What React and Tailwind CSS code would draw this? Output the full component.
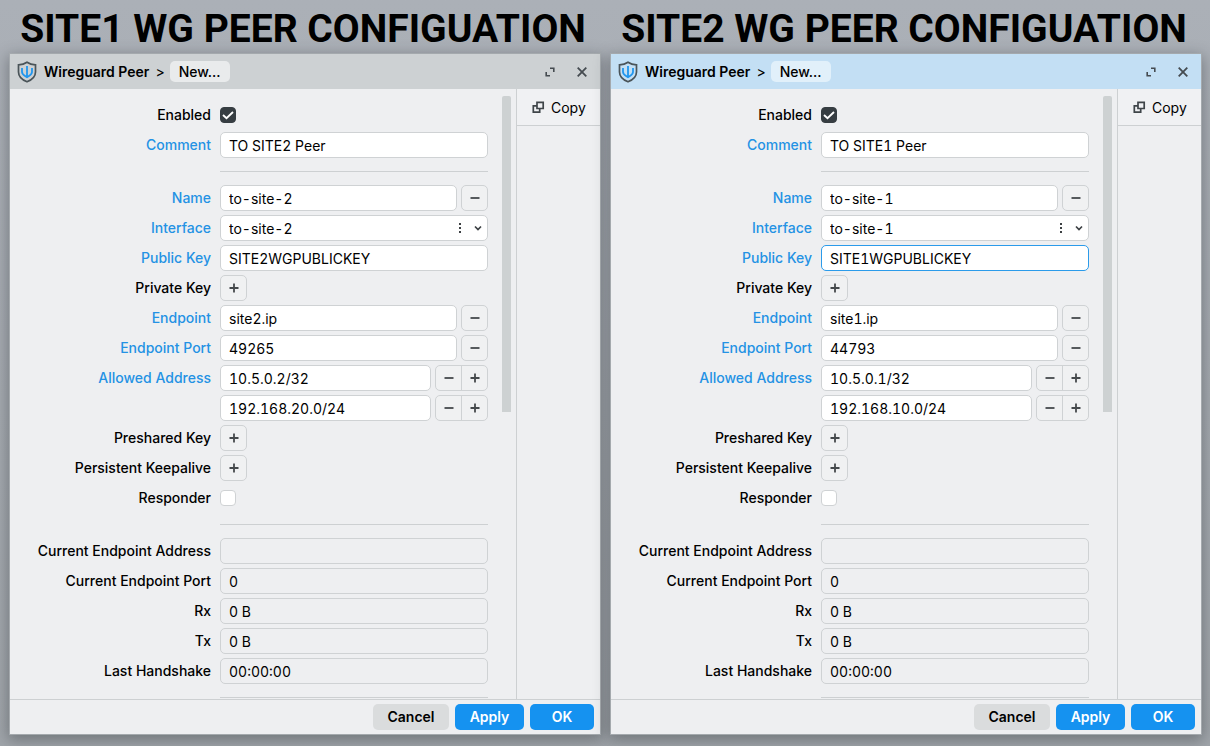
import { useId } from 'react';

const sites = [
  {
    title: 'SITE1 WG PEER CONFIGUATION',
    comment: 'TO SITE2 Peer',
    name: 'to-site-2',
    publicKey: 'SITE2WGPUBLICKEY',
    endpoint: 'site2.ip',
    port: '49265',
    allowed: ['10.5.0.2/32', '192.168.20.0/24'],
    active: false,
  },
  {
    title: 'SITE2 WG PEER CONFIGUATION',
    comment: 'TO SITE1 Peer',
    name: 'to-site-1',
    publicKey: 'SITE1WGPUBLICKEY',
    endpoint: 'site1.ip',
    port: '44793',
    allowed: ['10.5.0.1/32', '192.168.10.0/24'],
    active: true,
  },
];

const inputBase =
  'h-[26px] w-full min-w-0 flex-1 rounded-[5px] border px-2 pt-px tabular-nums outline-none';

function ShieldIcon() {
  return (
    <svg width="20" height="22" viewBox="0 0 20 22" fill="none">
      <path
        d="M10 1.2C7.6 2.9 4.7 3.7 1.5 3.8V11c0 4.6 3.5 7.8 8.5 9.8 5-2 8.500-5.2 8.500-9.8V3.8C15.3 3.7 12.4 2.900 10 1.200Z"
        stroke="#4a5459"
        strokeWidth="1.700"
      />
      <path
        d="M10 5v11.500M5 7v4c0 2.600 2.400 3.400 5 5.200 2.600-1.800 5-2.600 5-5.200V7"
        stroke="#2196ee"
        strokeWidth="1.800"
      />
    </svg>
  );
}

function MinusIcon() {
  return (
    <svg width="10" height="10" viewBox="0 0 10 10">
      <path d="M0.500 5h9" stroke="#45494c" strokeWidth="1.800" />
    </svg>
  );
}

function PlusIcon() {
  return (
    <svg width="10" height="10" viewBox="0 0 10 10">
      <path d="M0.500 5h9M5 0.500v9" stroke="#45494c" strokeWidth="1.800" />
    </svg>
  );
}

function SquareButton({ label, children }) {
  return (
    <button
      type="button"
      aria-label={label}
      className="flex h-[26px] w-[27px] shrink-0 items-center justify-center rounded-[5px] border border-[#cfd2d4] bg-[#f0f1f2]"
    >
      {children}
    </button>
  );
}

function ButtonPair() {
  return (
    <div className="flex h-[26px] w-[53px] shrink-0 divide-x divide-[#cfd2d4] rounded-[5px] border border-[#cfd2d4] bg-[#f0f1f2]">
      <button type="button" aria-label="Remove" className="flex flex-1 items-center justify-center">
        <MinusIcon />
      </button>
      <button type="button" aria-label="Add" className="flex flex-1 items-center justify-center">
        <PlusIcon />
      </button>
    </div>
  );
}

function Row({ label, htmlFor, blue, children }) {
  return (
    <div className="flex h-[30px] items-center gap-[9px]">
      <label
        htmlFor={htmlFor}
        className={`flex-1 text-right font-medium whitespace-nowrap ${blue ? 'text-[#2492e4]' : 'text-black'}`}
      >
        {label}
      </label>
      <div className="flex w-[268px] items-center gap-1">{children}</div>
    </div>
  );
}

function TextRow({ label, value, blue, readOnly, focused, children }) {
  const id = useId();
  const look = readOnly
    ? 'border-[#cfd2d4] bg-transparent'
    : focused
      ? 'border-[#2b9bea] bg-white'
      : 'border-[#cfd2d4] bg-white';
  return (
    <Row label={label} htmlFor={id} blue={blue}>
      <input
        id={id}
        type="text"
        defaultValue={value}
        readOnly={readOnly}
        aria-label={label ? undefined : 'Allowed Address 2'}
        className={`${inputBase} ${look}`}
      />
      {children}
    </Row>
  );
}

function SelectRow({ label, value }) {
  const id = useId();
  return (
    <Row label={label} htmlFor={id} blue>
      <div className="relative flex w-full">
        <select id={id} className={`${inputBase} appearance-none border-[#cfd2d4] bg-white`}>
          <option>{value}</option>
        </select>
        <svg
          className="pointer-events-none absolute top-2 right-[6px]"
          width="24"
          height="10"
          viewBox="0 0 24 10"
        >
          <path d="M1 0h2v2H1zM1 4h2v2H1zM1 8h2v2H1z" fill="#3c4043" />
          <path d="M17 3.500l3 3 3-3" fill="none" stroke="#3c4043" strokeWidth="1.700" />
        </svg>
      </div>
    </Row>
  );
}

function CheckRow({ label, checked }) {
  const id = useId();
  return (
    <Row label={label} htmlFor={id}>
      <div className="relative size-4">
        <input
          id={id}
          type="checkbox"
          defaultChecked={checked}
          className="peer block size-4 appearance-none rounded-sm border border-[#cfd2d4] bg-white checked:border-[#363d42] checked:bg-[#363d42]"
        />
        <svg
          className="pointer-events-none absolute inset-0 hidden peer-checked:block"
          width="16"
          height="16"
          viewBox="0 0 16 16"
        >
          <path d="M3 8l3.500 3.200 6.500-6.200" fill="none" stroke="#fff" strokeWidth="1.900" />
        </svg>
      </div>
    </Row>
  );
}

function AddRow({ label }) {
  return (
    <Row label={label}>
      <SquareButton label={`Add ${label}`}>
        <PlusIcon />
      </SquareButton>
    </Row>
  );
}

function Divider() {
  return (
    <div className="flex h-[23px] items-center justify-end">
      <hr className="w-[268px] border-[#cdd0d2]" />
    </div>
  );
}

function TitleBar({ active }) {
  return (
    <header
      className={`flex h-[35px] items-center pr-3 pl-[7px] ${active ? 'bg-[#c3dff4]' : 'bg-[#cdd1d3]'}`}
    >
      <ShieldIcon />
      <span className="ml-[7px] font-semibold">Wireguard Peer</span>
      <span className="ml-[6px]">&gt;</span>
      <span
        className={`ml-[5px] flex h-[21px] items-center rounded-[5px] px-[9px] font-medium ${active ? 'bg-[#e1f0fa]' : 'bg-[#e9ebec]'}`}
      >
        New...
      </span>
      <button type="button" aria-label="Maximize" className="ml-auto">
        <svg width="10" height="10" viewBox="0 0 10 10" fill="none" stroke="#454b50" strokeWidth="1.600">
          <path d="M5 1.200h3.800V5M1.200 5v3.800H5" />
        </svg>
      </button>
      <button type="button" aria-label="Close" className="ml-[21px]">
        <svg width="12" height="12" viewBox="0 0 12 12" fill="none" stroke="#454b50" strokeWidth="1.800">
          <path d="M1.700 1.700l8.600 8.600M10.300 1.700l-8.600 8.600" />
        </svg>
      </button>
    </header>
  );
}

function PeerWindow({ site }) {
  return (
    <section className="bg-[#eeeff1] shadow-[0_0_0_1px_#a4a9ad,0_4px_14px_2px_rgba(40,45,50,0.4)]">
      <TitleBar active={site.active} />
      <div className="flex">
        <form className="min-w-0 flex-1 pt-[11px]">
          <div className="pr-7">
            <CheckRow label="Enabled" checked />
            <TextRow label="Comment" value={site.comment} blue />
            <Divider />
            <TextRow label="Name" value={site.name} blue>
              <SquareButton label="Remove Name">
                <MinusIcon />
              </SquareButton>
            </TextRow>
            <SelectRow label="Interface" value={site.name} />
            <TextRow label="Public Key" value={site.publicKey} blue focused={site.active} />
            <AddRow label="Private Key" />
            <TextRow label="Endpoint" value={site.endpoint} blue>
              <SquareButton label="Remove Endpoint">
                <MinusIcon />
              </SquareButton>
            </TextRow>
            <TextRow label="Endpoint Port" value={site.port} blue>
              <SquareButton label="Remove Endpoint Port">
                <MinusIcon />
              </SquareButton>
            </TextRow>
            <TextRow label="Allowed Address" value={site.allowed[0]} blue>
              <ButtonPair />
            </TextRow>
            <TextRow value={site.allowed[1]}>
              <ButtonPair />
            </TextRow>
            <AddRow label="Preshared Key" />
            <AddRow label="Persistent Keepalive" />
            <CheckRow label="Responder" />
            <Divider />
            <TextRow label="Current Endpoint Address" value="" readOnly />
            <TextRow label="Current Endpoint Port" value="0" readOnly />
            <TextRow label="Rx" value="0 B" readOnly />
            <TextRow label="Tx" value="0 B" readOnly />
            <TextRow label="Last Handshake" value="00:00:00" readOnly />
            <div className="flex h-[13px] items-end justify-end pb-px">
              <hr className="w-[268px] border-[#cdd0d2]" />
            </div>
          </div>
        </form>
        {/* Scrollbar */}
        <div className="-ml-[14px] w-[14px] pt-[7px]">
          <div className="h-[316px] w-[9px] rounded-t-xs bg-[#cdd1d2]"></div>
        </div>
        <aside className="w-[84px] border-l border-[#cdd0d2]">
          <button
            type="button"
            className="flex h-[37px] w-full items-center gap-[6px] border-b border-[#cdd0d2] bg-[#f0f1f3] pt-0.5 pl-[15px]"
          >
            <svg className="mb-0.5" width="13" height="13" viewBox="0 0 13 13" fill="none" stroke="#3f4549" strokeWidth="1.700">
              <path d="M5 1.300h6.200v6.200H5zM4.500 4.800H1.300v6.400h6.400V8" />
            </svg>
            Copy
          </button>
        </aside>
      </div>
      <footer className="flex h-[35px] items-center justify-end gap-[6px] border-t border-[#cdd0d2] pr-[6px] font-semibold">
        <button type="button" className="h-[26px] w-[76px] rounded-[5px] bg-[#dadcdd]">
          Cancel
        </button>
        <button type="button" className="h-[26px] w-[69px] rounded-[5px] bg-[#1592f0] text-white">
          Apply
        </button>
        <button type="button" className="h-[26px] w-[64px] rounded-[5px] bg-[#1592f0] text-white">
          OK
        </button>
      </footer>
    </section>
  );
}

export default function App() {
  return (
    <main className="grid min-h-screen grid-cols-2 content-start gap-[11px] bg-linear-to-b from-[#abb0b7] to-[#a0a5aa] pr-[9px] pb-3 pl-[10px] font-['Inter',sans-serif] text-sm text-black">
      {sites.map((site) => (
        <div key={site.title}>
          <h1 className="h-[54px] pt-[9px] pr-1 text-center font-['Roboto',sans-serif] text-[39px] leading-10 font-bold whitespace-nowrap">
            {site.title}
          </h1>
          <PeerWindow site={site} />
        </div>
      ))}
    </main>
  );
}
